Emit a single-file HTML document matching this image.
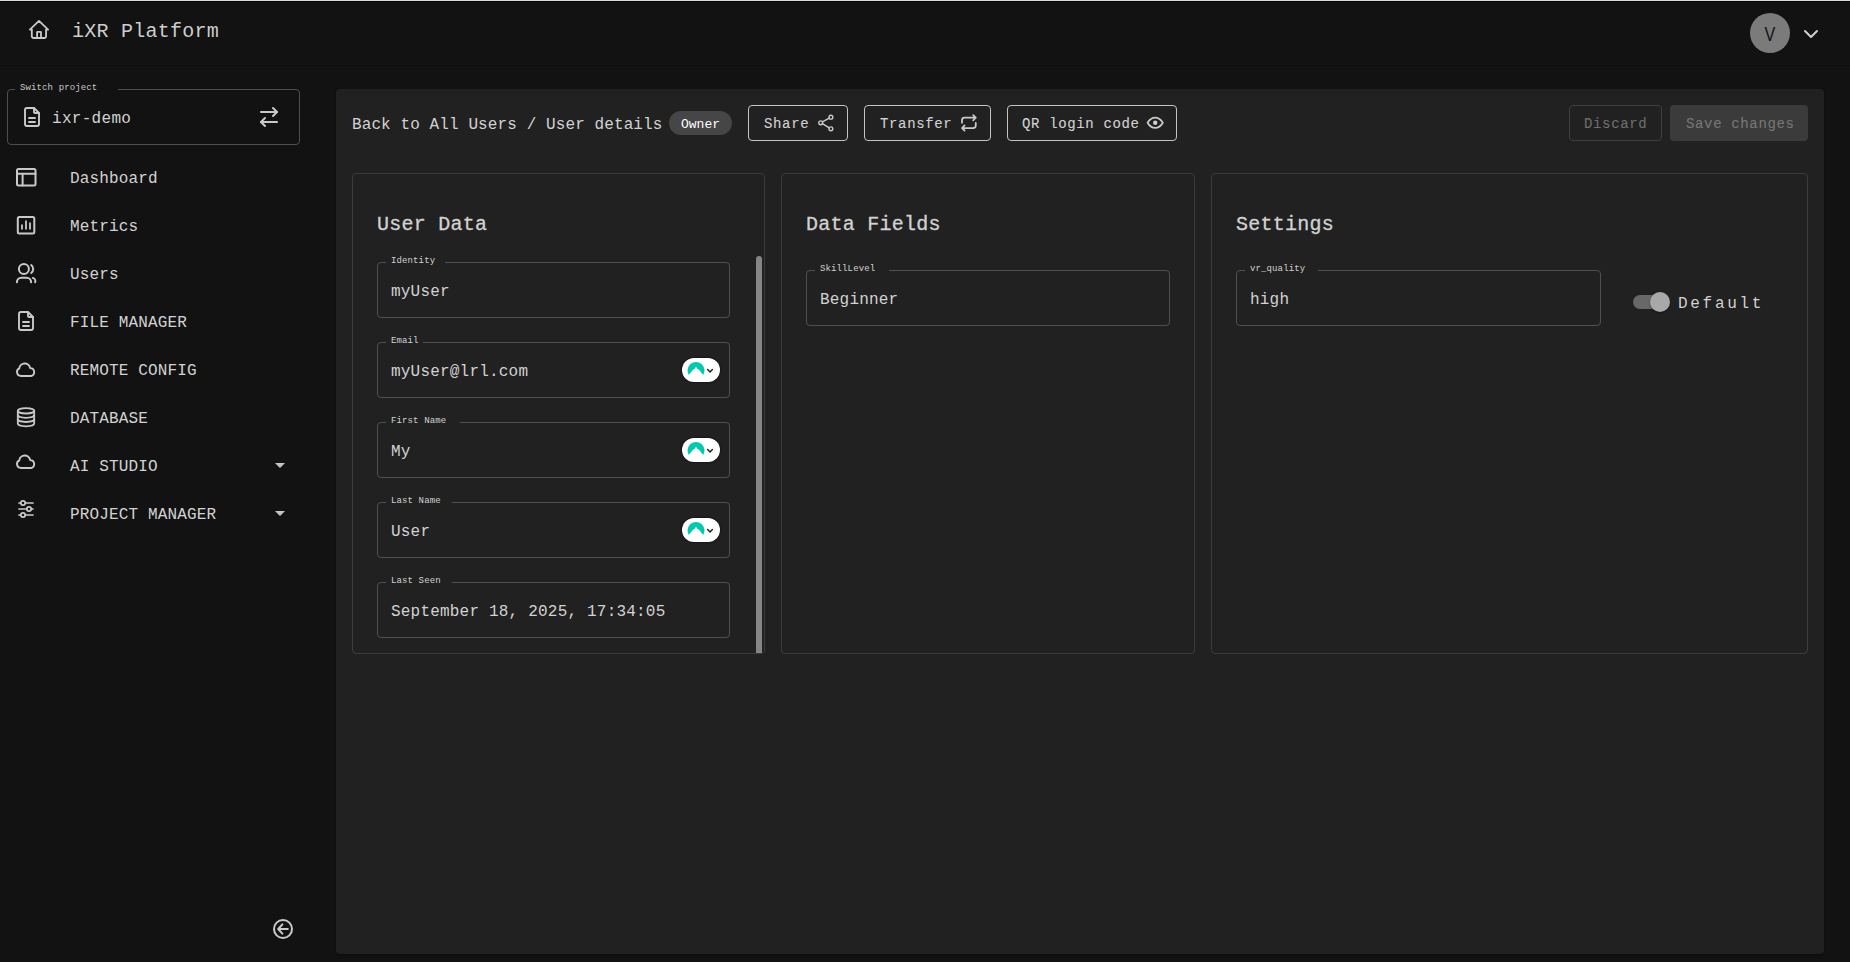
<!DOCTYPE html>
<html><head><meta charset="utf-8">
<style>
*{box-sizing:border-box;margin:0;padding:0}
html,body{width:1850px;height:962px;overflow:hidden;background:#121212}
body{position:relative;font-family:"Liberation Mono",monospace;color:#d2d2d2}
.a{position:absolute}
.t{position:absolute;white-space:pre;line-height:1}
.f16{font-size:16px}
.f20{font-size:20px;letter-spacing:0.25px}
.med{-webkit-text-stroke:0.3px currentColor}
.f9{font-size:9px}
.f14{font-size:14px;letter-spacing:0.65px;-webkit-text-stroke:0.12px currentColor}
#topline{left:0;top:0;width:1850px;height:1px;background:#dcdcdc}
#topline2{left:0;top:1px;width:1850px;height:1px;background:#050505}
#hdrline{left:0;top:65px;width:1850px;height:1px;background:#0e0e0e}
#panel{left:336px;top:89px;width:1488px;height:865px;background:#212121;border-radius:4px;box-shadow:0 1px 3px rgba(0,0,0,.35)}
.card{position:absolute;border:1px solid #3c3c3c;border-radius:4px;background:#212121}
.inp{position:absolute;border:1px solid #4d5155;border-radius:4px}
.notch{position:absolute;height:3px;background:#212121}
.btn{position:absolute;border:1px solid #c4c4c4;border-radius:4px;height:36px}
.pill{position:absolute;width:38px;height:24px;border-radius:12px;background:#fff;box-shadow:0 0 1.5px 0.6px rgba(0,0,0,.5)}
</style></head>
<body>
<div id="topline" class="a"></div>
<div id="topline2" class="a"></div>
<div id="hdrline" class="a"></div>

<!-- header -->
<div class="t f20" style="left:72px;top:22px;color:#cdcdcd">iXR Platform</div>
<div class="a" style="left:1750px;top:13px;width:40px;height:40px;border-radius:50%;background:#7b7b7b"></div>
<div class="t" style="font-family:'Liberation Sans',sans-serif;font-size:21px;left:1763px;top:23px;color:#141414;transform:scaleX(0.77);transform-origin:7px 0">V</div>

<!-- sidebar -->
<div class="inp" style="left:7px;top:89px;width:293px;height:56px;border-color:#4b4f52"></div>
<div class="notch" style="left:15px;top:88px;width:103px;background:#121212"></div>
<div class="t f9" style="left:20px;top:84px;color:#c8c8c8;letter-spacing:0.12px">Switch project</div>
<div class="t f16" style="left:52px;top:111px;letter-spacing:0.3px">ixr-demo</div>

<div class="t f16" style="left:70px;top:171px;letter-spacing:0.15px">Dashboard</div>
<div class="t f16" style="left:70px;top:219px;letter-spacing:0.15px">Metrics</div>
<div class="t f16" style="left:70px;top:267px;letter-spacing:0.15px">Users</div>
<div class="t f16" style="left:70px;top:315px;letter-spacing:0.15px">FILE MANAGER</div>
<div class="t f16" style="left:70px;top:363px;letter-spacing:0.15px">REMOTE CONFIG</div>
<div class="t f16" style="left:70px;top:411px;letter-spacing:0.15px">DATABASE</div>
<div class="t f16" style="left:70px;top:459px;letter-spacing:0.15px">AI STUDIO</div>
<div class="t f16" style="left:70px;top:507px;letter-spacing:0.15px">PROJECT MANAGER</div>

<!-- main panel -->
<div id="panel" class="a"></div>
<div class="t f16" style="left:352px;top:117px;letter-spacing:0.1px">Back to All Users / User details</div>
<div class="a" style="left:669px;top:111px;width:63px;height:24px;border-radius:12px;background:#464646"></div>
<div class="t" style="font-size:13px;left:681px;top:118px;color:#fff">Owner</div>

<div class="btn" style="left:748px;top:105px;width:100px"></div>
<div class="t f14" style="left:764px;top:117px">Share</div>
<div class="btn" style="left:864px;top:105px;width:127px"></div>
<div class="t f14" style="left:880px;top:117px">Transfer</div>
<div class="btn" style="left:1007px;top:105px;width:170px"></div>
<div class="t f14" style="left:1022px;top:117px">QR login code</div>

<div class="btn" style="left:1569px;top:105px;width:93px;border-color:#3f3f3f"></div>
<div class="t f14" style="left:1584px;top:117px;color:#6e6e6e">Discard</div>
<div class="a" style="left:1670px;top:105px;width:138px;height:36px;border-radius:4px;background:#3b3b3b"></div>
<div class="t f14" style="left:1686px;top:117px;color:#777">Save changes</div>

<!-- cards -->
<div class="card" style="left:352px;top:173px;width:413px;height:481px"></div>
<div class="card" style="left:781px;top:173px;width:414px;height:481px"></div>
<div class="card" style="left:1211px;top:173px;width:597px;height:481px"></div>

<div class="t f20 med" style="left:377px;top:215px">User Data</div>
<div class="t f20 med" style="left:806px;top:215px">Data Fields</div>
<div class="t f20 med" style="left:1236px;top:215px">Settings</div>

<!-- user data inputs -->
<div class="inp" style="left:377px;top:262px;width:353px;height:56px"></div>
<div class="notch" style="left:386px;top:261px;width:59px"></div>
<div class="t f9" style="left:391px;top:257px;letter-spacing:0.12px">Identity</div>
<div class="t f16" style="left:391px;top:284px;letter-spacing:0.2px">myUser</div>

<div class="inp" style="left:377px;top:342px;width:353px;height:56px"></div>
<div class="notch" style="left:386px;top:341px;width:37px"></div>
<div class="t f9" style="left:391px;top:337px;letter-spacing:0.12px">Email</div>
<div class="t f16" style="left:391px;top:364px;letter-spacing:0.2px">myUser@lrl.com</div>
<div class="pill" style="left:682px;top:358px"><svg width="38" height="24" viewBox="0 0 38 24" style="position:absolute;left:0;top:0"><path d="M6.8 17A8.5 8.5 0 1 1 21.2 17L16.8 11.6L15.6 11.2L14.7 9.7L14 8.8L13.3 9.7L12.4 11.2L11.2 11.6Z" fill="#00c9b1"/><path d="M25.6 11.4L28 13.9L30.4 11.4" fill="none" stroke="#1e1e1e" stroke-width="1.4" stroke-linecap="round" stroke-linejoin="round"/></svg></div>

<div class="inp" style="left:377px;top:422px;width:353px;height:56px"></div>
<div class="notch" style="left:386px;top:421px;width:74px"></div>
<div class="t f9" style="left:391px;top:417px;letter-spacing:0.12px">First Name</div>
<div class="t f16" style="left:391px;top:444px;letter-spacing:0.2px">My</div>
<div class="pill" style="left:682px;top:438px"><svg width="38" height="24" viewBox="0 0 38 24" style="position:absolute;left:0;top:0"><path d="M6.8 17A8.5 8.5 0 1 1 21.2 17L16.8 11.6L15.6 11.2L14.7 9.7L14 8.8L13.3 9.7L12.4 11.2L11.2 11.6Z" fill="#00c9b1"/><path d="M25.6 11.4L28 13.9L30.4 11.4" fill="none" stroke="#1e1e1e" stroke-width="1.4" stroke-linecap="round" stroke-linejoin="round"/></svg></div>

<div class="inp" style="left:377px;top:502px;width:353px;height:56px"></div>
<div class="notch" style="left:386px;top:501px;width:66px"></div>
<div class="t f9" style="left:391px;top:497px;letter-spacing:0.12px">Last Name</div>
<div class="t f16" style="left:391px;top:524px;letter-spacing:0.2px">User</div>
<div class="pill" style="left:682px;top:518px"><svg width="38" height="24" viewBox="0 0 38 24" style="position:absolute;left:0;top:0"><path d="M6.8 17A8.5 8.5 0 1 1 21.2 17L16.8 11.6L15.6 11.2L14.7 9.7L14 8.8L13.3 9.7L12.4 11.2L11.2 11.6Z" fill="#00c9b1"/><path d="M25.6 11.4L28 13.9L30.4 11.4" fill="none" stroke="#1e1e1e" stroke-width="1.4" stroke-linecap="round" stroke-linejoin="round"/></svg></div>

<div class="inp" style="left:377px;top:582px;width:353px;height:56px"></div>
<div class="notch" style="left:386px;top:581px;width:66px"></div>
<div class="t f9" style="left:391px;top:577px;letter-spacing:0.12px">Last Seen</div>
<div class="t f16" style="left:391px;top:604px;letter-spacing:0.2px">September 18, 2025, 17:34:05</div>

<!-- scrollbar -->
<div class="a" style="left:756px;top:256px;width:6px;height:397px;background:#858585;border-radius:3px 3px 0 0"></div>

<!-- data fields -->
<div class="inp" style="left:806px;top:270px;width:364px;height:56px"></div>
<div class="notch" style="left:815px;top:269px;width:74px"></div>
<div class="t f9" style="left:820px;top:265px;letter-spacing:0.12px">SkillLevel</div>
<div class="t f16" style="left:820px;top:292px;letter-spacing:0.2px">Beginner</div>

<!-- settings -->
<div class="inp" style="left:1236px;top:270px;width:365px;height:56px"></div>
<div class="notch" style="left:1245px;top:269px;width:73px"></div>
<div class="t f9" style="left:1250px;top:265px;letter-spacing:0.12px">vr_quality</div>
<div class="t f16" style="left:1250px;top:292px;letter-spacing:0.2px">high</div>

<div class="a" style="left:1633px;top:295px;width:34px;height:14px;border-radius:7px;background:#686868"></div>
<div class="a" style="left:1650px;top:292px;width:20px;height:20px;border-radius:50%;background:#a8a8a8;box-shadow:0 1px 2px rgba(0,0,0,.4)"></div>
<div class="t f16" style="left:1678px;top:296px;letter-spacing:2.7px">Default</div>

<!-- icons overlay -->
<svg class="a" style="left:0;top:0" width="1850" height="962" viewBox="0 0 1850 962" fill="none" stroke="#c9c9c9" stroke-width="2" stroke-linecap="round" stroke-linejoin="round">
<!-- home -->
<g stroke-width="1.8">
<path d="M31.6 29.6H29.9L39 20.9L48.1 29.6H46.4"/><path d="M31.8 29.6V36.1a1.9 1.9 0 0 0 1.9 1.9H44.2a1.9 1.9 0 0 0 1.9 -1.9V29.6"/><path d="M37.1 38V32.3a0.4 0.4 0 0 1 0.4 -0.4H40.6a0.4 0.4 0 0 1 0.4 0.4V38"/>
</g>
<!-- avatar chevron -->
<path d="M1805 31L1811 37L1817 31" stroke="#d0d0d0"/>
<!-- switch project file -->
<g transform="translate(20,105)" stroke-width="1.9">
<path d="M14 3v4a1 1 0 0 0 1 1h4"/><path d="M17 21h-10a2 2 0 0 1 -2 -2v-14a2 2 0 0 1 2 -2h7l5 5v11a2 2 0 0 1 -2 2z"/><path d="M9 17h6"/><path d="M9 13h6"/>
</g>
<!-- swap arrows -->
<g transform="translate(257,105)">
<path d="M16 3l4 4l-4 4"/><path d="M20 7H4"/><path d="M8 21l-4 -4l4 -4"/><path d="M4 17h16"/>
</g>
<!-- dashboard layout -->
<rect x="17" y="169" width="18.5" height="16.5" rx="1.5"/>
<path d="M17 173.8H35.5M22.6 173.8V185.5"/>
<!-- metrics -->
<rect x="17.8" y="217" width="16.5" height="16.5" rx="1.5"/>
<path d="M22 229.5V224.5M26 229.5V220.5M30 229.5V222.5" stroke-width="1.8" stroke-linecap="butt"/>
<!-- users -->
<circle cx="23.9" cy="269" r="5"/>
<path d="M31.2 265a5 5 0 0 1 0 8"/>
<path d="M16.9 282.2a4.5 4.5 0 0 1 4.5 -4.4h5.2a4.5 4.5 0 0 1 4.5 4.4"/>
<path d="M32.8 277.9a3.5 3.5 0 0 1 2.4 4.3"/>
<!-- file manager -->
<g transform="translate(14,309)" stroke-width="1.9">
<path d="M14 3v4a1 1 0 0 0 1 1h4"/><path d="M17 21h-10a2 2 0 0 1 -2 -2v-14a2 2 0 0 1 2 -2h7l5 5v11a2 2 0 0 1 -2 2z"/><path d="M9 17h6"/><path d="M9 13h6"/>
</g>
<!-- cloud remote config -->
<path stroke-width="1.9" d="M21 376A4 4 0 0 1 19.28 368.39A5.5 5.5 0 0 1 30.17 368.09A4 4 0 0 1 31 376Z"/>
<!-- database -->
<g stroke-width="1.8">
<ellipse cx="26" cy="410.8" rx="8.2" ry="2.7"/>
<path d="M17.8 410.8V423.6a8.2 2.7 0 0 0 16.4 0V410.8"/>
<path d="M17.8 415.1a8.2 2.7 0 0 0 16.4 0"/>
<path d="M17.8 419.3a8.2 2.7 0 0 0 16.4 0"/>
</g>
<!-- cloud ai studio -->
<path stroke-width="1.9" d="M21 468A4 4 0 0 1 19.28 460.39A5.5 5.5 0 0 1 30.17 460.09A4 4 0 0 1 31 468Z"/>
<!-- sliders -->
<g stroke-width="1.7">
<path d="M19 503H20.7M25.3 503H33"/><circle cx="23" cy="503" r="2.2"/>
<path d="M19 509H26.7M31.3 509H33"/><circle cx="29" cy="509" r="2.2"/>
<path d="M19 515H20.7M25.3 515H33"/><circle cx="23" cy="515" r="2.2"/>
</g>
<!-- triangles -->
<path d="M275 463H285L280 468Z M275 511H285L280 516Z" fill="#c4c4c4" stroke="none"/>
<!-- collapse -->
<circle cx="283" cy="929" r="9"/>
<path d="M278.3 929H287.8M282.4 924.4L278.2 929L282.4 933.6"/>
<!-- share -->
<g stroke-width="1.4">
<circle cx="820.7" cy="122.8" r="1.9"/><circle cx="830.9" cy="117.2" r="1.9"/><circle cx="830.9" cy="128.8" r="1.9"/>
<path d="M822.4 121.9L829.2 118.1M822.4 123.7L829.2 127.9"/>
</g>
<!-- transfer -->
<g transform="translate(958.56,112.54) scale(0.86)" stroke-width="2.05">
<path d="M4 12v-3a3 3 0 0 1 3 -3h13m-3 -3l3 3l-3 3"/><path d="M20 12v3a3 3 0 0 1 -3 3h-13m3 3l-3 -3l3 -3"/>
</g>
<!-- eye -->
<g transform="translate(1145,112.5) scale(0.85)" stroke-width="2">
<path d="M21 12c-2.4 4 -5.4 6 -9 6c-3.6 0 -6.6 -2 -9 -6c2.4 -4 5.4 -6 9 -6c3.6 0 6.6 2 9 6"/>
</g>
<circle cx="1155.2" cy="122.7" r="2.2" fill="#cfcfcf" stroke="none"/>
</svg>
</body></html>
